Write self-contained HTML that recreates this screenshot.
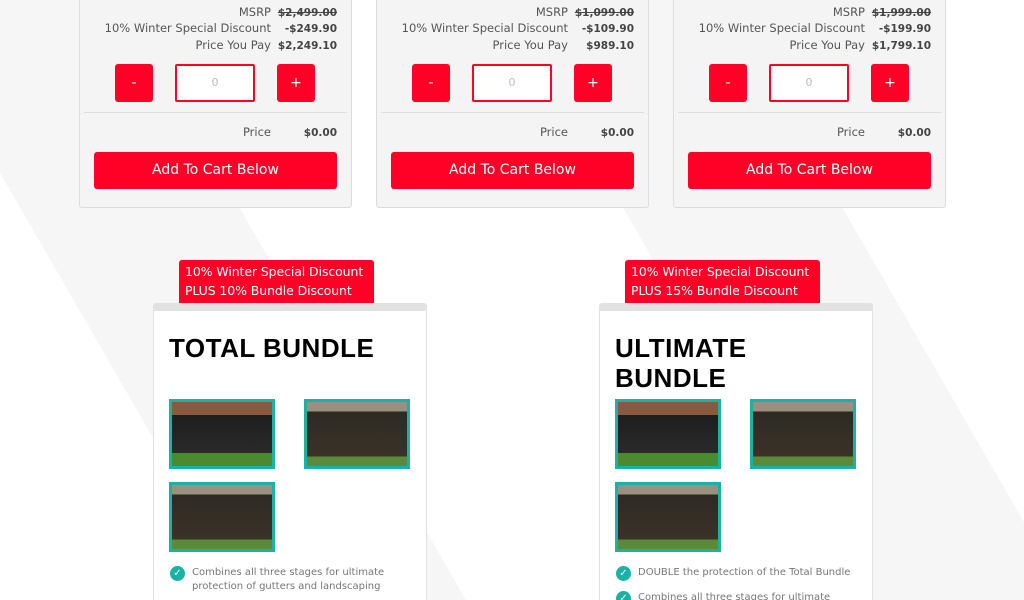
<!DOCTYPE html>
<html><head><meta charset="utf-8"><style>
*{box-sizing:border-box;margin:0;padding:0}
html,body{width:1024px;height:600px;overflow:hidden}
body{position:relative;font-family:"Liberation Sans","DejaVu Sans",sans-serif;
background:linear-gradient(60deg,#fff 0,#fff 18%,#f6f6f6 18%,#f6f6f6 34%,#fff 34%,#fff 62%,#f6f6f6 62%,#f6f6f6 78%,#fff 78%);}
.card{position:absolute;top:-2px;width:273px;height:210px;background:#f4f4f4;border:1px solid #dcdcdc;border-radius:3px;font-family:"DejaVu Sans",sans-serif}
.row{position:absolute;right:14px;font-size:11.5px;line-height:16px;color:#555;display:flex;align-items:baseline}
.row .l{text-align:right}
.row .v{width:66px;text-align:right;font-weight:bold;font-size:10.5px;color:#444}
.btn{position:absolute;top:65px;width:38px;height:38px;background:#ff0026;border-radius:3px;color:#fff;text-align:center;line-height:38px;font-size:14px}
.inp{position:absolute;top:65px;left:95px;width:80px;height:38px;border:2px solid #ff0026;background:#fff;border-radius:2px;color:#bbb;text-align:center;line-height:34px;font-size:11px}
.hr{position:absolute;top:113px;left:4px;right:4px;border-top:1px solid #ddd}
.add{position:absolute;left:14px;top:153px;width:243px;height:37px;background:#ff0026;border-radius:3px;color:#fff;text-align:center;line-height:37px;font-size:14px}
.tag{position:absolute;top:260px;width:195px;height:44px;background:#ff0026;color:#fff;font-size:12.5px;line-height:19px;padding:2px 6px;border-radius:3px 3px 0 0;font-family:"DejaVu Sans",sans-serif;white-space:nowrap;letter-spacing:-.1px}
.b{position:absolute;top:303px;width:274px;height:310px;background:#fff;border:1px solid #e2e2e2;border-top:8px solid #e2e2e2;border-radius:3px}
.b h2{position:absolute;left:15px;top:22px;font-size:26px;line-height:30px;font-weight:900;color:#000;letter-spacing:.5px}
.img{position:absolute;width:106px;height:70px;border:3px solid #19b2a5;background:linear-gradient(#8a5a3e 0,#8a5a3e 20%,#1e1e1e 20%,#2a2a2a 80%,#4a8a30 80%)}
.img.w{background:linear-gradient(#9a9080 0,#9a9080 15%,#2e2a24 15%,#3a3228 85%,#5a8a3a 85%)}
.ck{position:absolute;left:16px;font-size:10px;color:#777;line-height:14px;font-family:"DejaVu Sans",sans-serif;padding-left:22px}
.ck:before{content:"✓";position:absolute;left:0;top:0;width:15px;height:15px;border-radius:50%;background:#19b2a5;color:#fff;font-size:10px;text-align:center;line-height:15px}
</style></head><body>

<div class="card" style="left:79px">
<div class="row" style="top:5px"><span class="l">MSRP</span><span class="v" style="text-decoration:line-through">$2,499.00</span></div>
<div class="row" style="top:21px"><span class="l">10% Winter Special Discount</span><span class="v">-$249.90</span></div>
<div class="row" style="top:38px"><span class="l">Price You Pay</span><span class="v">$2,249.10</span></div>
<div class="btn" style="left:35px">-</div><div class="inp">0</div><div class="btn" style="left:197px">+</div>
<div class="hr"></div>
<div class="row" style="top:125px"><span class="l">Price</span><span class="v">$0.00</span></div>
<div class="add">Add To Cart Below</div></div>

<div class="card" style="left:376px">
<div class="row" style="top:5px"><span class="l">MSRP</span><span class="v" style="text-decoration:line-through">$1,099.00</span></div>
<div class="row" style="top:21px"><span class="l">10% Winter Special Discount</span><span class="v">-$109.90</span></div>
<div class="row" style="top:38px"><span class="l">Price You Pay</span><span class="v">$989.10</span></div>
<div class="btn" style="left:35px">-</div><div class="inp">0</div><div class="btn" style="left:197px">+</div>
<div class="hr"></div>
<div class="row" style="top:125px"><span class="l">Price</span><span class="v">$0.00</span></div>
<div class="add">Add To Cart Below</div></div>

<div class="card" style="left:673px">
<div class="row" style="top:5px"><span class="l">MSRP</span><span class="v" style="text-decoration:line-through">$1,999.00</span></div>
<div class="row" style="top:21px"><span class="l">10% Winter Special Discount</span><span class="v">-$199.90</span></div>
<div class="row" style="top:38px"><span class="l">Price You Pay</span><span class="v">$1,799.10</span></div>
<div class="btn" style="left:35px">-</div><div class="inp">0</div><div class="btn" style="left:197px">+</div>
<div class="hr"></div>
<div class="row" style="top:125px"><span class="l">Price</span><span class="v">$0.00</span></div>
<div class="add">Add To Cart Below</div></div>

<div class="tag" style="left:179px">10% Winter Special Discount<br>PLUS 10% Bundle Discount</div>
<div class="b" style="left:153px"><h2>TOTAL BUNDLE</h2>
<div class="img" style="left:15px;top:88px"></div>
<div class="img w" style="left:150px;top:88px"></div>
<div class="img w" style="left:15px;top:171px"></div>
<div class="ck" style="top:255px">Combines all three stages for ultimate<br>protection of gutters and landscaping</div>
</div>

<div class="tag" style="left:625px">10% Winter Special Discount<br>PLUS 15% Bundle Discount</div>
<div class="b" style="left:599px"><h2>ULTIMATE<br>BUNDLE</h2>
<div class="img" style="left:15px;top:88px"></div>
<div class="img w" style="left:150px;top:88px"></div>
<div class="img w" style="left:15px;top:171px"></div>
<div class="ck" style="top:255px">DOUBLE the protection of the Total Bundle</div>
<div class="ck" style="top:280px">Combines all three stages for ultimate</div>
</div>
</body></html>
